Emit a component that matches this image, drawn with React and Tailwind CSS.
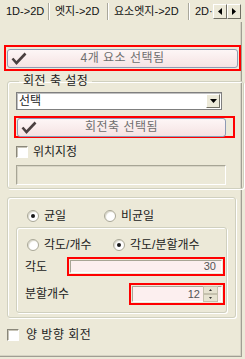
import React from "react";

const font = { fontFamily: '"Liberation Sans", "Noto Sans CJK KR", sans-serif' };

function Check() {
  return (
    <svg width="16" height="13" viewBox="0 0 16 13" className="shrink-0">
      <path d="M1.5 6.5 L5.5 11 L14.5 1.5" fill="none" stroke="#4a4040" strokeWidth="2.6" strokeLinejoin="miter" />
    </svg>
  );
}

function SelButton({ label }) {
  return (
    <div className="h-[19px] flex-1 rounded-[3px] border border-[#8e9bb5] bg-gradient-to-b from-[#fdf6f6] to-[#f5e3e3] flex items-center pl-[3px] relative">
      <Check />
      <span className="absolute inset-0 flex items-center justify-center text-[12px] text-[#6e6e6e] leading-none tracking-[0.5px]">{label}</span>
    </div>
  );
}

function Radio({ on }) {
  return (
    <span className="w-[12px] h-[12px] rounded-full border border-[#a9a796] bg-white flex items-center justify-center shrink-0 shadow-[inset_1px_1px_1px_#d8d6c8]">
      {on && <span className="w-[4px] h-[4px] rounded-full bg-[#1a1a1a]" />}
    </span>
  );
}

function Checkbox() {
  return <span className="w-[12px] h-[12px] bg-white shrink-0 border-t border-l border-[#8a877a] shadow-[inset_1px_1px_0_#c8c5b8] border-r border-b border-r-white border-b-white" />;
}

export default function App() {
  return (
    <div className="w-[245px] h-[359px] bg-[#ECE9D8] flex flex-col overflow-hidden text-[#222]" style={font}>
      {/* tabs */}
      <div className="h-[22px] flex items-center text-[11px] leading-none text-[#111] shrink-0">
        <div className="w-[48px] pl-[6px]">1D-&gt;2D</div>
        <div className="w-[2px] h-[17px] border-l border-[#a9a79b] bg-white" />
        <div className="w-[57px] pl-[5px]">엣지-&gt;2D</div>
        <div className="w-[2px] h-[17px] border-l border-[#a9a79b] bg-white" />
        <div className="w-[79px] pl-[5px]">요소엣지-&gt;2D</div>
        <div className="w-[2px] h-[17px] border-l border-[#a9a79b] bg-white" />
        <div className="pl-[5px] whitespace-nowrap">2D·</div>
        <div className="flex mt-[1px]">
          <div className="w-[14px] h-[15px] bg-[#ECE9D8] border border-t-white border-l-white border-r-[#716f64] border-b-[#716f64] flex items-center justify-center">
            <svg width="4" height="7" viewBox="0 0 4 7"><path d="M4 0 L0 3.5 L4 7 Z" fill="#000" /></svg>
          </div>
          <div className="w-[14px] h-[15px] bg-[#ECE9D8] border border-t-white border-l-white border-r-[#716f64] border-b-[#716f64] flex items-center justify-center">
            <svg width="4" height="7" viewBox="0 0 4 7"><path d="M0 0 L4 3.5 L0 7 Z" fill="#000" /></svg>
          </div>
        </div>
      </div>

      {/* panel */}
      <div className="w-[242px] h-[335px] border-r border-b border-[#a09e93] shadow-[inset_-1px_-1px_0_#d6d3c4] flex flex-col">
        {/* red box 1 */}
        <div className="mt-[23px] ml-[4px] w-[237px] h-[26px] border-2 border-[#f00] flex items-center px-[1px]">
          <SelButton label="4개 요소 선택됨" />
        </div>

        {/* group 1 */}
        <fieldset className="ml-[7px] mt-[3px] w-[229px] h-[115px] border border-[#d0d0bf] rounded-[3px] shadow-[inset_1px_1px_0_#fff,1px_1px_0_#fff] px-[8px] flex flex-col">
          <legend className="ml-[3px] px-[4px] text-[12px] leading-[14px] tracking-[0.5px] text-[#222]">회전 축 설정</legend>
          <div className="mt-[4px] w-[206px] h-[18px] bg-white border border-[#7f7f7f] shadow-[inset_1px_1px_0_#c0c0c0] flex items-center">
            <span className="flex-1 pl-[2px] text-[12px] leading-none">선택</span>
            <div className="w-[14px] h-[14px] mr-[1px] bg-[#ECE9D8] border border-t-white border-l-white border-r-[#716f64] border-b-[#716f64] flex items-center justify-center">
              <svg width="7" height="4" viewBox="0 0 7 4"><path d="M0 0 L7 0 L3.5 4 Z" fill="#000" /></svg>
            </div>
          </div>
          <div className="mt-[6px] -ml-[2px] w-[221px] h-[22px] border-2 border-[#f00] flex items-center pl-[1px] pr-[7px]">
            <SelButton label="회전축 선택됨" />
          </div>
          <div className="mt-[8px] flex items-center h-[12px]">
            <Checkbox />
            <span className="ml-[5px] text-[12px] leading-none">위치지정</span>
          </div>
          <div className="mt-[7px] w-[210px] h-[20px] bg-[#ECE9D8] border border-[#a7a595] border-r-white border-b-white shadow-[inset_1px_1px_0_#d8d5c6]" />
        </fieldset>

        {/* group 2 */}
        <div className="ml-[7px] mt-[8px] w-[229px] h-[121px] border border-[#d0d0bf] rounded-[3px] shadow-[inset_1px_1px_0_#fff,1px_1px_0_#fff] flex flex-col">
          <div className="mt-[12px] flex items-center h-[12px] text-[12px] leading-none">
            <div className="w-[96px] pl-[19px] flex items-center"><Radio on /><span className="ml-[5px]">균일</span></div>
            <div className="flex items-center"><Radio /><span className="ml-[5px]">비균일</span></div>
          </div>
          <div className="ml-[8px] mt-[5px] w-[211px] h-[86px] border border-[#d0d0bf] rounded-[3px] shadow-[inset_1px_1px_0_#fff,1px_1px_0_#fff] flex flex-col">
            <div className="mt-[11px] flex items-center h-[12px] text-[12px] leading-none">
              <div className="w-[96px] pl-[10px] flex items-center"><Radio /><span className="ml-[5px]">각도/개수</span></div>
              <div className="flex items-center"><Radio on /><span className="ml-[5px]">각도/분할개수</span></div>
            </div>
            <div className="mt-[6px] flex items-center h-[19px]">
              <span className="w-[50px] pl-[8px] text-[12px] leading-none">각도</span>
              <div className="w-[158px] h-[19px] border-2 border-[#f00] p-[1px]">
                <div className="h-full bg-[#fcefef] border border-[#a7a595] border-r-white border-b-white flex items-center justify-end pr-[5px] text-[11px] text-[#555] leading-none">30</div>
              </div>
            </div>
            <div className="mt-[7px] flex items-center h-[22px]">
              <span className="w-[112px] pl-[8px] text-[12px] leading-none">분할개수</span>
              <div className="w-[96px] h-[22px] border-2 border-[#f00] p-[1px] flex">
                <div className="flex-1 bg-[#fcefef] border border-[#a7a595] border-r-white border-b-white flex items-center justify-end pr-[3px] text-[11px] text-[#555] leading-none">
                  12
                  <div className="ml-[3px] flex flex-col w-[15px]">
                    <div className="h-[8px] bg-[#e6e2d0] border border-[#c4c0ad] flex items-center justify-center">
                      <svg width="3" height="2" viewBox="0 0 3 2"><path d="M0 2 L1.5 0 L3 2 Z" fill="#333" /></svg>
                    </div>
                    <div className="h-[8px] bg-[#e6e2d0] border border-[#c4c0ad] flex items-center justify-center">
                      <svg width="3" height="2" viewBox="0 0 3 2"><path d="M0 0 L3 0 L1.5 2 Z" fill="#333" /></svg>
                    </div>
                  </div>
                </div>
              </div>
            </div>
          </div>
        </div>

        <div className="mt-[10px] ml-[7px] flex items-center h-[13px]">
          <Checkbox />
          <span className="ml-[7px] text-[12px] leading-none tracking-[0.5px]">양 방향 회전</span>
        </div>
      </div>
    </div>
  );
}
